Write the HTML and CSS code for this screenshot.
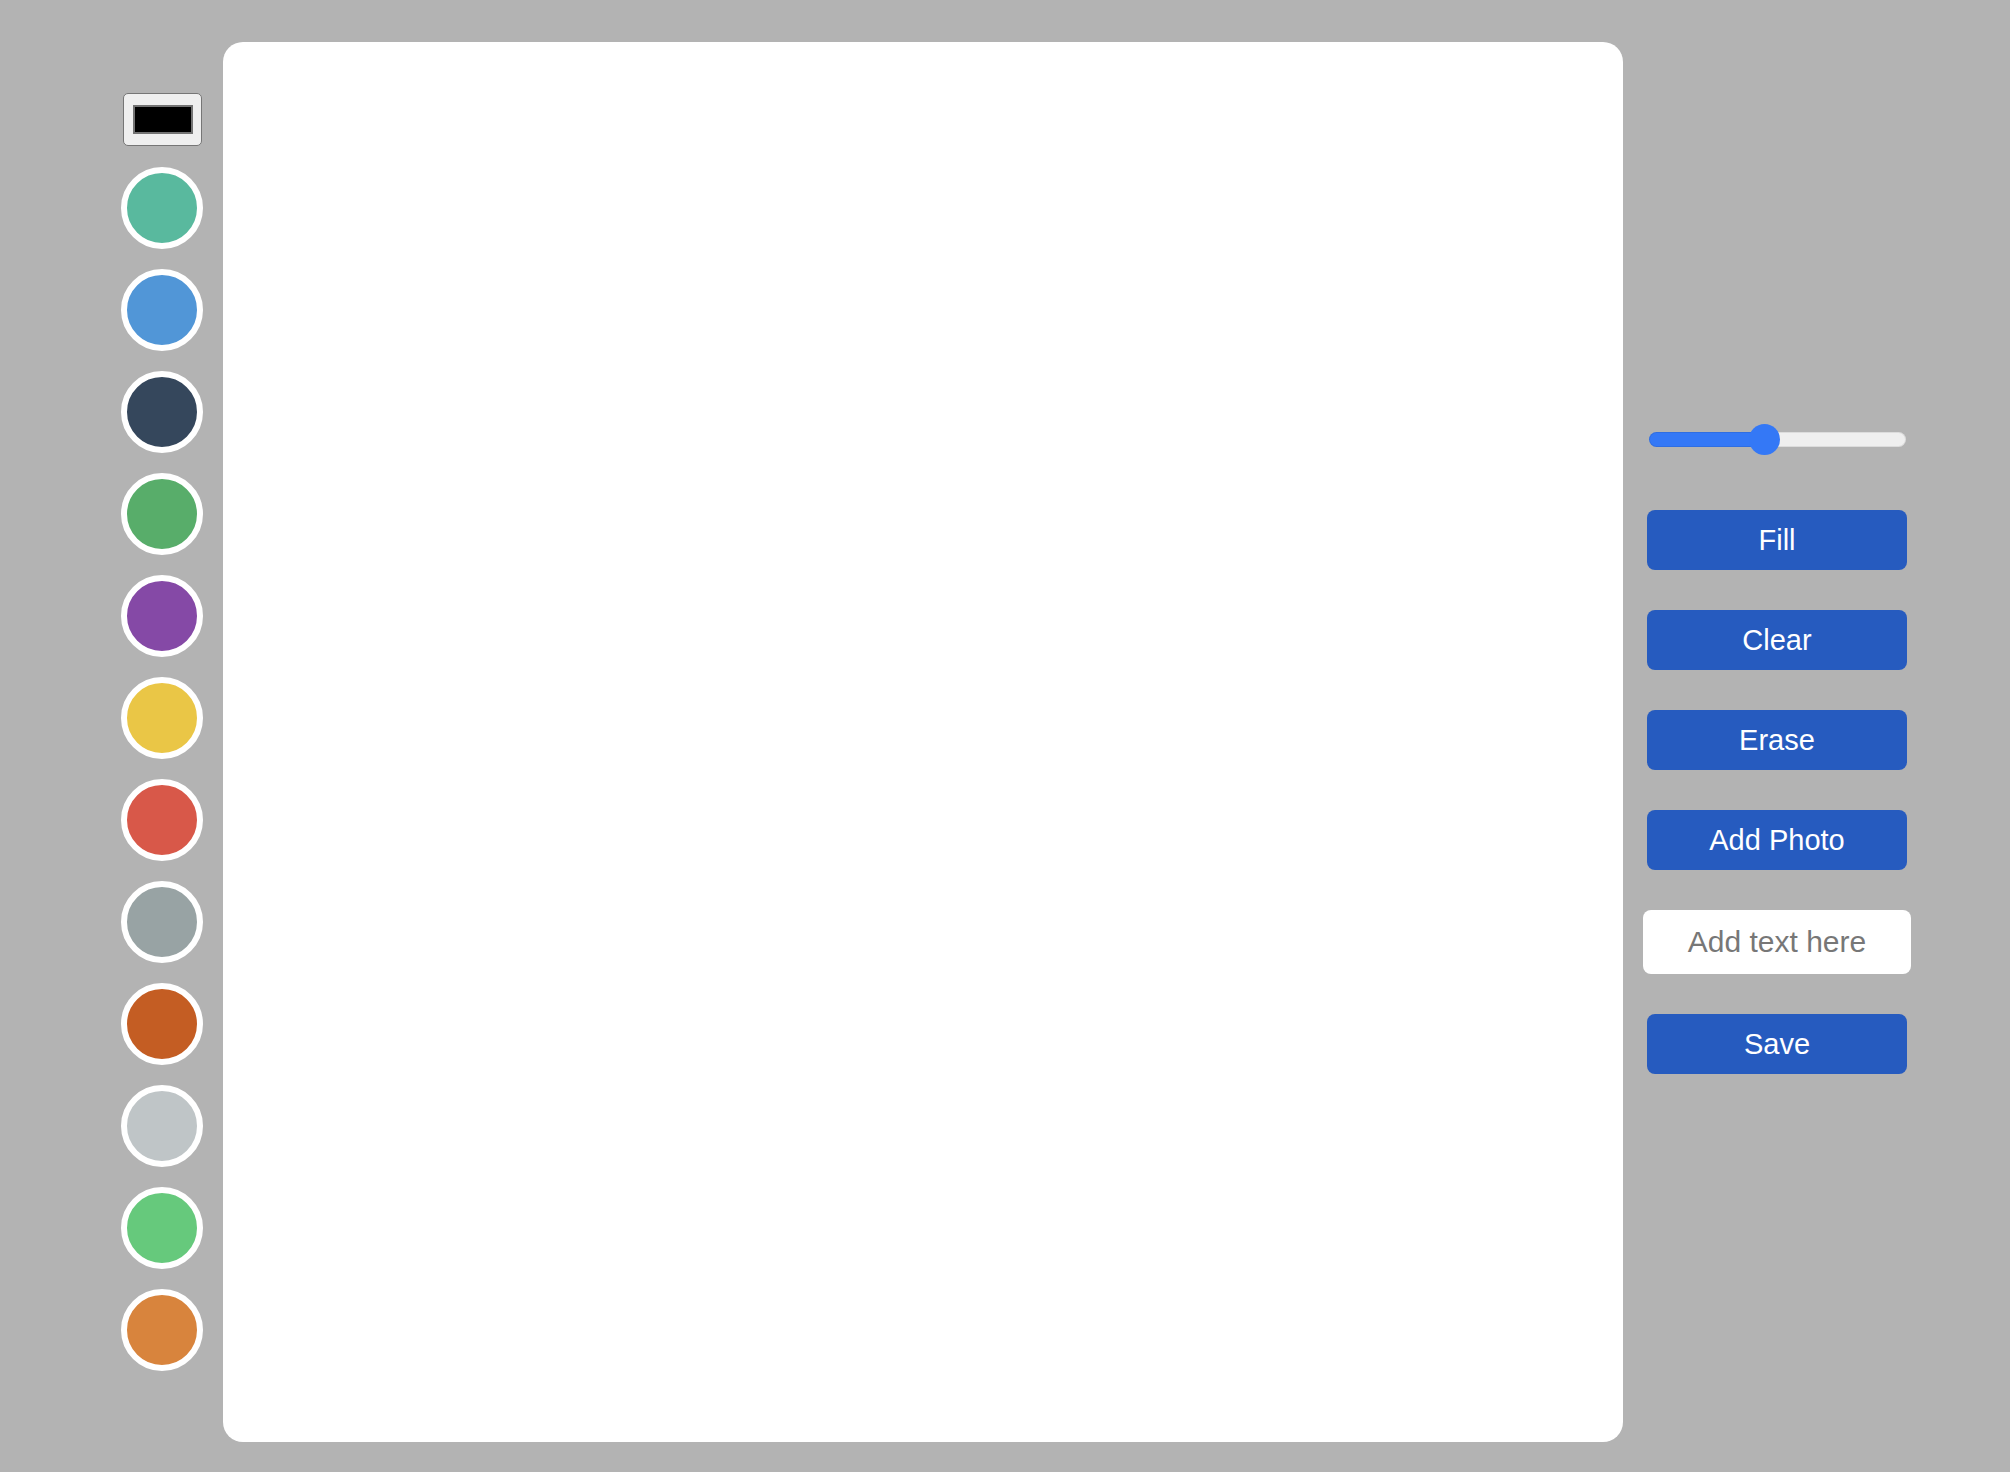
FILE: index.html
```html
<!doctype html>
<html lang="en">
<head>
    <meta charset="UTF-8">
    <meta name="viewport" content="width=device-width, initial-scale=1.0">
    <title>Sketch Pad</title>

    <link rel="stylesheet" href="styles.css">
</head>
<body>
    <div class="app">
        <aside class="palette">
            <input type="color" class="color-picker" value="#000000" aria-label="Pick a colour">
            <button class="swatch teal" aria-label="Teal"></button>
            <button class="swatch blue" aria-label="Blue"></button>
            <button class="swatch asphalt" aria-label="Dark blue"></button>
            <button class="swatch green" aria-label="Green"></button>
            <button class="swatch purple" aria-label="Purple"></button>
            <button class="swatch yellow" aria-label="Yellow"></button>
            <button class="swatch red" aria-label="Red"></button>
            <button class="swatch concrete" aria-label="Grey"></button>
            <button class="swatch pumpkin" aria-label="Dark orange"></button>
            <button class="swatch silver" aria-label="Light grey"></button>
            <button class="swatch emerald" aria-label="Light green"></button>
            <button class="swatch carrot" aria-label="Orange"></button>
        </aside>

        <canvas class="board" width="1400" height="1400"></canvas>

        <section class="tools">
            <input type="range" class="size-slider" min="1" max="100" value="45" aria-label="Brush size">
            <button class="tool-btn">Fill</button>
            <button class="tool-btn">Clear</button>
            <button class="tool-btn">Erase</button>
            <button class="tool-btn">Add Photo</button>
            <input type="text" class="text-input" placeholder="Add text here">
            <button class="tool-btn">Save</button>
        </section>
    </div>
</body>
</html>
```

FILE: styles.css
```css
body {
    margin: 0;
    padding: 0;
    background-color: #b3b3b3;
    font-family: 'Liberation Sans', Arial, sans-serif;
}

.app {
    display: flex;
    align-items: flex-start;
    padding: 42px 0 0 121px;
}

/* colour column */
.palette {
    display: flex;
    flex-direction: column;
    align-items: center;
    gap: 20px;
    width: 82px;
    margin: 51px 20px 0 0;
}

.color-picker {
    -webkit-appearance: none;
    appearance: none;
    box-sizing: border-box;
    width: 79px;
    height: 53px;
    margin: 0 0 1px 0;
    padding: 0;
    border: 1px solid #767676;
    border-radius: 5px;
    background-color: #efefef;
    cursor: pointer;
}

.color-picker::-webkit-color-swatch-wrapper {
    padding: 11px 8px 11px 9px;
}

.color-picker::-webkit-color-swatch {
    border: 2px solid #737373;
    border-radius: 0;
}

.swatch {
    box-sizing: border-box;
    width: 82px;
    height: 82px;
    padding: 0;
    border: 6px solid #fff;
    border-radius: 50%;
    cursor: pointer;
}

.teal { background-color: #59b99e; }
.blue { background-color: #5196d7; }
.asphalt { background-color: #35475c; }
.green { background-color: #58ad6a; }
.purple { background-color: #8549a6; }
.yellow { background-color: #eac646; }
.red { background-color: #d85849; }
.concrete { background-color: #98a3a4; }
.pumpkin { background-color: #c45d23; }
.silver { background-color: #bfc5c7; }
.emerald { background-color: #66c97c; }
.carrot { background-color: #d8843d; }

/* drawing area */
.board {
    display: block;
    width: 1400px;
    height: 1400px;
    background-color: #fff;
    border-radius: 20px;
}

/* right hand tools */
.tools {
    display: flex;
    flex-direction: column;
    align-items: center;
    gap: 40px;
    width: 268px;
    margin: 382px 0 0 20px;
}

.size-slider {
    -webkit-appearance: none;
    appearance: none;
    width: 257px;
    height: 31px;
    margin: 0 0 15px 1px;
    background: transparent;
}

.size-slider::-webkit-slider-runnable-track {
    height: 15px;
    border-radius: 8px;
    background: linear-gradient(to right, #3478f6 0 45%, #efefef 45% 100%);
    box-shadow: inset 0 0 0 1px rgba(0, 0, 0, 0.08);
}

.size-slider::-webkit-slider-thumb {
    -webkit-appearance: none;
    appearance: none;
    width: 31px;
    height: 31px;
    margin-top: -8px;
    border: none;
    border-radius: 50%;
    background-color: #3478f6;
}

.tool-btn {
    width: 260px;
    height: 60px;
    padding: 0;
    border: none;
    border-radius: 8px;
    background-color: #265bbf;
    color: #fff;
    font-family: 'Liberation Sans', Arial, sans-serif;
    font-size: 29px;
    cursor: pointer;
}

.tool-btn:hover,
.tool-btn:focus {
    background-color: #1f4fa8;
}

.text-input {
    box-sizing: border-box;
    width: 268px;
    height: 64px;
    padding: 0 10px;
    border: none;
    border-radius: 8px;
    background-color: #fff;
    font-family: 'Liberation Sans', Arial, sans-serif;
    font-size: 30px;
    text-align: center;
}

.text-input::placeholder {
    color: #777;
}
```
